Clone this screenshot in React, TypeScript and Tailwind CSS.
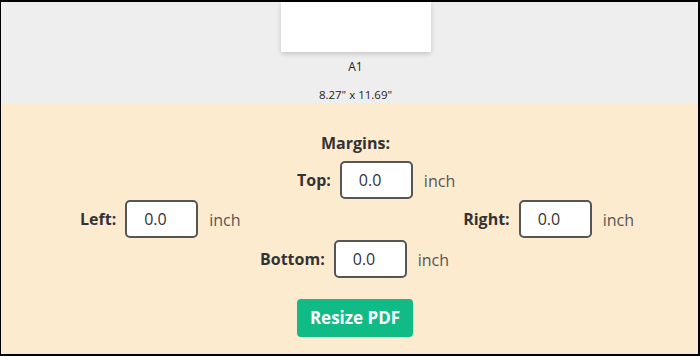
import React from "react";

const font = { fontFamily: '"Open Sans", "Liberation Sans", sans-serif' };

function MarginField({ label, value }: { label: string; value: string }) {
  return (
    <div className="flex items-center">
      <span className="text-[16px] font-bold text-[#333]">{label}</span>
      <input
        readOnly
        value={value}
        className="ml-[9px] h-[38px] w-[73px] rounded-[5px] border-2 border-[#555] bg-white pl-[17px] text-[16px] text-[#333] outline-none"
      />
      <span className="ml-[11px] mt-[2px] text-[16px] text-[#555]">inch</span>
    </div>
  );
}

export default function App() {
  return (
    <div
      style={font}
      className="flex h-[356px] w-[700px] flex-col overflow-hidden border-l border-r-2 border-t-2 border-b-2 border-black"
    >
      {/* Page preview */}
      <div className="flex h-[101px] shrink-0 flex-col items-center overflow-hidden bg-[#eeeeee] pl-[12px]">
        <div className="h-[54px] w-[150px] bg-white shadow-[0_2px_5px_rgba(0,0,0,0.18)]" />
        <div className="mt-[7px] text-[12px] leading-4 text-[#222]">A1</div>
        <div className="mt-[12px] text-[11.5px] leading-4 text-[#222]">8.27" x 11.69"</div>
      </div>

      {/* Margins form */}
      <div className="flex flex-1 flex-col bg-[#fdebd0] pt-[30px]">
        <div className="pl-[12px] text-center text-[16px] font-bold leading-5 text-[#333]">Margins:</div>
        <div className="mt-[8px] flex pl-[296px]">
          <MarginField label="Top:" value="0.0" />
        </div>
        <div className="mt-[1px] flex justify-between pl-[79px] pr-[61px]">
          <MarginField label="Left:" value="0.0" />
          <div className="mr-[3px]">
            <MarginField label="Right:" value="0.0" />
          </div>
        </div>
        <div className="mt-[2px] flex pl-[259px]">
          <MarginField label="Bottom:" value="0.0" />
        </div>
        <div className="mt-[21px] flex justify-center">
          <button className="ml-[11px] h-[38px] w-[116px] rounded-[4px] bg-[#10bb86] text-[17px] font-bold text-white">
            Resize PDF
          </button>
        </div>
      </div>
    </div>
  );
}
